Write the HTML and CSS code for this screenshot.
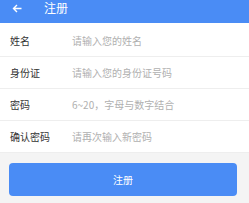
FILE: index.html
```html
<!DOCTYPE html>
<html lang="zh-CN">
<head>
  <meta charset="UTF-8" />
  <meta name="viewport" content="width=device-width, initial-scale=1.0"/>
  <title>注册</title>
  <link rel="stylesheet" href="styles.css">
</head>
<body>

  <div class="topbar">
    <span class="back">
      <svg width="10" height="9" viewBox="0 0 10 9"><path d="M9.5 4.5H1.5M5 1L1.5 4.5L5 8" fill="none" stroke="#fff" stroke-width="1.4"/></svg>
    </span>
    <span class="title">注册</span>
  </div>

  <div class="form">
    <div class="row">
      <span class="label">姓名</span>
      <span class="hint">请输入您的姓名</span>
    </div>
    <div class="row">
      <span class="label">身份证</span>
      <span class="hint">请输入您的身份证号码</span>
    </div>
    <div class="row">
      <span class="label">密码</span>
      <span class="hint">6~20，字母与数字结合</span>
    </div>
    <div class="row">
      <span class="label">确认密码</span>
      <span class="hint">请再次输入新密码</span>
    </div>
  </div>

  <div class="actions">
    <button class="submit-btn">注册</button>
  </div>

</body>
</html>
```

FILE: styles.css
```css
* {
  margin: 0;
  padding: 0;
  box-sizing: border-box;
}

html, body {
  height: 100%;
  font-family: "Noto Sans CJK SC", "Noto Sans", sans-serif;
  background: #f4f4f4;
  overflow: hidden;
}

.topbar {
  height: 23px;
  background: #4a8cf5;
  display: flex;
  align-items: flex-start;
  padding-top: 1px;
  color: #fff;
}

.back {
  width: 44px;
  padding-left: 12px;
  padding-top: 3px;
  display: flex;
}

.title {
  font-size: 12px;
  line-height: 14px;
}

.form {
  background: #fff;
}

.row {
  height: 32px;
  display: flex;
  align-items: center;
  padding-left: 10px;
  border-bottom: 1px solid #eeeeee;
}

.row:first-child {
  height: 34px;
  padding-top: 2px;
}

.label {
  width: 62px;
  font-size: 10px;
  color: #333;
}

.hint {
  font-size: 10px;
  color: #b0b0b0;
}

.actions {
  padding: 10px 12px 0 9px;
}

.submit-btn {
  width: 100%;
  height: 33px;
  border: none;
  border-radius: 4px;
  background: #4a8cf5;
  color: #fff;
  font-family: inherit;
  font-size: 10px;
}
```
